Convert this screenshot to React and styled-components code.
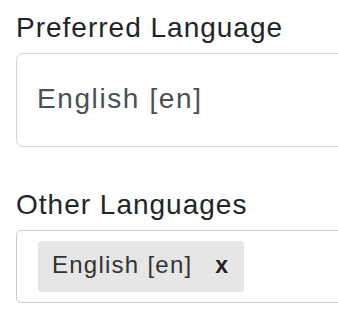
import React from 'react'
import styled, { createGlobalStyle } from 'styled-components'

const Global = createGlobalStyle`
  html, body {
    margin: 0;
    padding: 0;
    background: #fff;
    overflow: hidden;
  }
  body {
    font-family: "Liberation Sans", Arial, sans-serif;
  }
`

const Form = styled.div`
  padding: 11px 0 0 16px;
  width: 420px;
`

const Group = styled.div`
  margin-bottom: 41px;
`

const Label = styled.label`
  display: block;
  font-size: 28px;
  letter-spacing: 1px;
  line-height: 34px;
  color: #212529;
  margin-bottom: 8px;
`

const Select = styled.div`
  box-sizing: border-box;
  height: 94px;
  display: flex;
  align-items: center;
  padding: 0 20px 2px;
  border: 1px solid #ced4da;
  border-radius: 7px;
  font-size: 28px;
  letter-spacing: 1.6px;
  color: #495057;
`

const MultiSelect = styled.div`
  box-sizing: border-box;
  height: 73px;
  display: flex;
  align-items: flex-start;
  padding: 10px 21px;
  border: 1px solid #cccccc;
  border-radius: 5px;
`

const Chip = styled.div`
  display: flex;
  align-items: center;
  height: 51px;
  width: 206px;
  box-sizing: border-box;
  padding: 0 16px 3px 14px;
  background: #e6e6e6;
  border-radius: 4px;
  font-size: 24px;
  letter-spacing: 1.25px;
  color: #333;
`

const Remove = styled.span`
  margin-left: auto;
  font-weight: bold;
  font-size: 23px;
  letter-spacing: 0;
  color: #222;
`

export default function App() {
  return (
    <>
      <Global />
      <Form>
        <Group>
          <Label>Preferred Language</Label>
          <Select>English [en]</Select>
        </Group>
        <div>
          <Label>Other Languages</Label>
          <MultiSelect>
            <Chip>
              English [en]
              <Remove>x</Remove>
            </Chip>
          </MultiSelect>
        </div>
      </Form>
    </>
  )
}
